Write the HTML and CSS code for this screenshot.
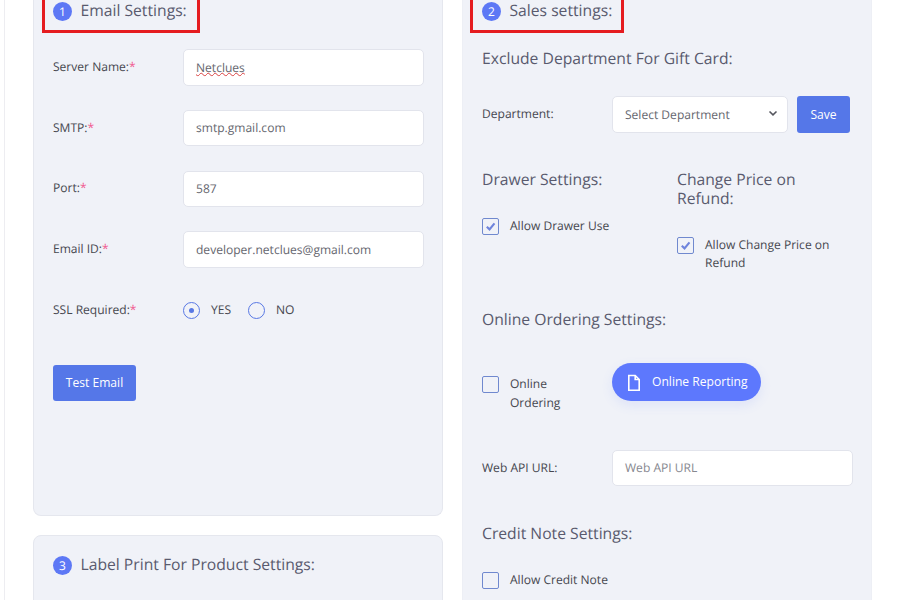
FILE: index.html
```html
<!DOCTYPE html>
<html lang="en">
<head>
<meta charset="utf-8">
<title>Settings</title>
<link rel="stylesheet" href="styles.css">
</head>
<body>
<main class="page">
  <div class="column">
    <section class="panel panel-email">
      <h2 class="title title-marked mark-email"><span class="badge">1</span>Email Settings:</h2>
      <div class="fields">
        <div class="field"><label class="label">Server Name:<i>*</i></label><div class="input"><span class="misspelled">Netclues</span></div></div>
        <div class="field"><label class="label">SMTP:<i>*</i></label><div class="input">smtp.gmail.com</div></div>
        <div class="field"><label class="label">Port:<i>*</i></label><div class="input">587</div></div>
        <div class="field"><label class="label">Email ID:<i>*</i></label><div class="input">developer.netclues@gmail.com</div></div>
        <div class="field"><label class="label">SSL Required:<i>*</i></label>
          <div class="radios"><span class="radio radio-on"></span><span class="radio-text">YES</span><span class="radio"></span><span class="radio-text">NO</span></div>
        </div>
      </div>
      <button class="button button-test">Test Email</button>
    </section>
    <section class="panel panel-label">
      <h2 class="title"><span class="badge">3</span>Label Print For Product Settings:</h2>
    </section>
  </div>
  <div class="column">
    <section class="panel panel-sales">
      <h2 class="title title-marked mark-sales"><span class="badge">2</span>Sales settings:</h2>
      <h3 class="subtitle subtitle-exclude">Exclude Department For Gift Card:</h3>
      <div class="field department">
        <label class="label">Department:</label>
        <div class="input select">Select Department
          <svg class="chevron" viewBox="0 0 10 7"><path d="M1.500 1.500 5 4.800 8.500 1.500"/></svg>
        </div>
        <button class="button button-save">Save</button>
      </div>
      <div class="split">
        <div>
          <h3 class="subtitle">Drawer Settings:</h3>
          <div class="check"><span class="box"><svg viewBox="0 0 17 17"><path d="M4.300 8.700 7.400 11.700 13 5"/></svg></span><span>Allow Drawer Use</span></div>
        </div>
        <div>
          <h3 class="subtitle">Change Price on Refund:</h3>
          <div class="check"><span class="box"><svg viewBox="0 0 17 17"><path d="M4.300 8.700 7.400 11.700 13 5"/></svg></span><span>Allow Change Price on Refund</span></div>
        </div>
      </div>
      <h3 class="subtitle">Online Ordering Settings:</h3>
      <div class="online">
        <div class="check"><span class="box"></span><span>Online Ordering</span></div>
        <button class="pill"><svg class="file" viewBox="0 0 14 18"><path d="M1.800 1.500H8.200L12.200 5.500V16.200H1.800Z"/><path d="M8.200 1.500V5.500H12.200"/></svg>Online Reporting</button>
      </div>
      <div class="field api">
        <label class="label">Web API URL:</label>
        <div class="input placeholder">Web API URL</div>
      </div>
      <h3 class="subtitle subtitle-credit">Credit Note Settings:</h3>
      <div class="check"><span class="box"></span><span>Allow Credit Note</span></div>
    </section>
  </div>
</main>
</body>
</html>
```
FILE: styles.css
```css
*, *::after { box-sizing: border-box; }

body {
  margin: 0;
  background: #fff;
  color: #46474f;
  font: 12.050px/18.500px "Open Sans", sans-serif;
  text-rendering: geometricPrecision;
}

.page {
  display: flex;
  gap: 19px;
  height: 600px;
  margin-left: 4px;
  padding-left: 28px;
  border-left: 1px solid #ededf1;
  overflow: hidden;
}

.column { width: 410px; flex: none; }

.panel {
  padding: 0 19px;
  background: #f0f2f8;
  border: 1px solid #e5e7ee;
}

.panel-email {
  height: 516px;
  border-top: 0;
  border-radius: 0 0 8px 8px;
}

.panel-label {
  height: 100px;
  margin-top: 19px;
  padding-top: 18px;
  border-radius: 8px 8px 0 0;
}

.panel-sales { height: 640px; border-top: 0; border-color: #edeff5; }

.title, .subtitle {
  margin: 0;
  color: #595a6e;
  font-size: 15.700px;
  font-weight: 400;
  line-height: 19px;
}

.title { display: flex; position: relative; height: 20px; padding-top: 1px; }

.title-marked::after {
  content: "";
  position: absolute;
  top: -5px;
  left: -11px;
  height: 37.500px;
  border: 3px solid #e51c20;
}

.mark-email::after { width: 158px; }
.mark-sales::after { left: -12px; width: 153.500px; }

.badge {
  width: 19px;
  height: 19px;
  margin: 1px 8.500px 0 0;
  border-radius: 50%;
  background: #5d78f5;
  color: #fff;
  font-size: 12px;
  line-height: 19px;
  text-align: center;
}

.fields { display: grid; grid-auto-rows: 36.500px; gap: 24.250px; margin-top: 29px; }

.field { display: flex; align-items: center; height: 36.500px; }

.label { width: 130px; flex: none; }
.label i { color: #f0568c; font-style: normal; }
.fields .field:nth-child(odd) .label { padding-bottom: 1px; }

.input {
  display: flex;
  flex: none;
  align-items: center;
  width: 241px;
  height: 100%;
  padding: 1px 12px 0;
  border: 1px solid #e2e4ec;
  border-radius: 5px;
  background: #fff;
  color: #65666e;
}

.misspelled {
  text-decoration: underline wavy #d94242 1px;
  text-decoration-skip-ink: none;
  text-underline-offset: 0;
}

.placeholder { color: #87888f; }

.radios { display: flex; align-items: center; }

.radio {
  display: grid;
  place-items: center;
  width: 17px;
  height: 17px;
  border: 1px solid #5878e4;
  border-radius: 50%;
}

.radio-on::after {
  content: "";
  width: 5px;
  height: 5px;
  border-radius: 50%;
  background: #5878e4;
}

.radio-text { margin: 0 17px 0 11px; }

.button {
  height: 36px;
  padding: 0;
  border: 0;
  border-radius: 3px;
  background: #5577e8;
  color: #fff;
  font: 500 12.100px/18px "Open Sans", sans-serif;
}

.button-test { width: 83px; margin-top: 36px; }
.button-save { width: 53px; height: 37px; margin-left: 9px; padding-top: 1px; }

.subtitle-exclude { margin-top: 29px; }

.department { margin-top: 28px; }
.select { width: 176px; justify-content: space-between; padding-right: 9px; }
.chevron { width: 10px; height: 7px; margin-bottom: 3px; fill: none; stroke: #55565e; stroke-width: 1.600; }

.split {
  display: grid;
  grid-template-columns: 160px 160px;
  gap: 35px;
  height: 140px;
  margin-top: 37px;
}

.split .check { margin-top: 28px; }

.check { display: flex; gap: 11px; }

.box {
  width: 17px;
  height: 17px;
  flex: none;
  margin-top: 1px;
  border: 1px solid #7089cf;
  border-radius: 2px;
}

.box svg { display: block; width: 15px; height: 15px; fill: none; stroke: #6f84dc; stroke-width: 2.400; }

.online { display: flex; height: 38px; margin-top: 34px; }
.online .check { width: 100px; margin: 12.500px 30px 0 0; }

.pill {
  display: flex;
  align-items: center;
  width: 149px;
  height: 38px;
  padding: 1px 0 0 15px;
  border: 0;
  border-radius: 19px;
  background: #5d78fd;
  box-shadow: 0 4px 12px rgba(93, 120, 255, .12);
  color: #fff;
  font: 500 12.100px/18px "Open Sans", sans-serif;
  white-space: nowrap;
}

.file { width: 14px; height: 18px; margin: 1px 11px 0 0; fill: none; stroke: #fff; stroke-width: 1.600; }

.api { margin-top: 49px; }

.subtitle-credit { margin: 38px 0 28px; }
```
